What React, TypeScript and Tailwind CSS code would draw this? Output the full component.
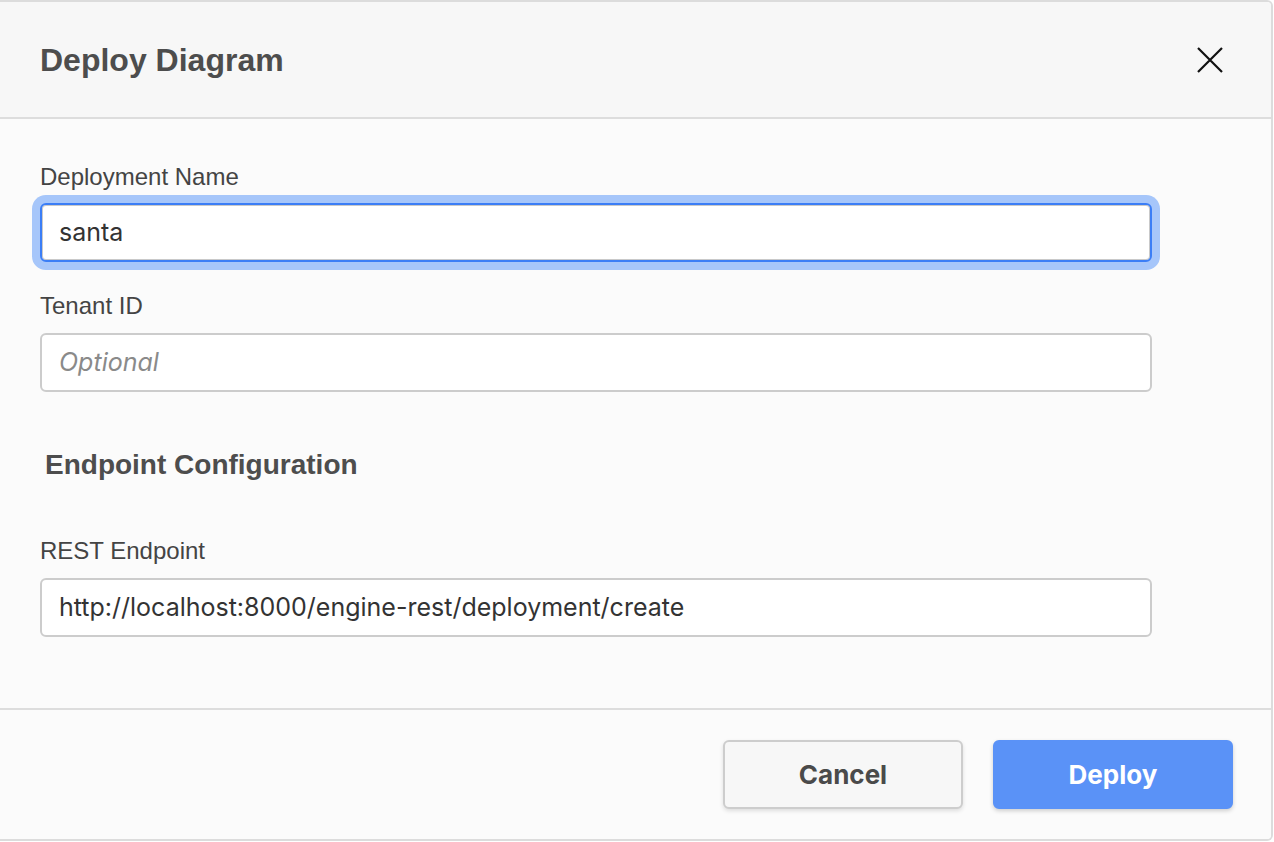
import React from "react";

const font = { fontFamily: '"Liberation Sans", Arial, Helvetica, sans-serif' };
const sys = { fontFamily: 'Inter, "Liberation Sans", Arial, sans-serif' };

export default function App() {
  return (
    <div className="w-[1274px] h-[842px] bg-white" style={font}>
      <div className="w-[1273px] h-[841px] flex flex-col bg-[#fbfbfb] border-t-2 border-r-2 border-b-2 border-[#dcdcdc] rounded-r-[6px] overflow-hidden">
        {/* Header */}
        <div className="h-[117px] shrink-0 flex items-center justify-between pl-[40px] pr-[48px] bg-[#f7f7f7] border-b-2 border-[#dddddd]">
          <h1 className="text-[32px] leading-[40px] font-bold text-[#4d4d4d]">Deploy Diagram</h1>
          <button className="w-[26px] h-[26px] flex items-center justify-center">
            <svg width="26" height="26" viewBox="0 0 26 26">
              <path d="M1 1L25 25M25 1L1 25" stroke="#111" strokeWidth="2.2" fill="none" />
            </svg>
          </button>
        </div>

        {/* Body */}
        <div className="flex-1 pl-[40px] pt-[40px]">
          <div className="w-[1112px] flex flex-col">
            <label className="text-[24px] leading-[36px] text-[#444] mb-[8px]">Deployment Name</label>
            <div
              className="h-[59px] flex items-center px-[17px] bg-white border-2 border-[#3b7ef6] rounded-[6px] shadow-[0_0_0_8px_#a6c6fa,inset_0_0_0_1px_#c9c9c9] text-[25px] text-[#333]"
              style={sys}
            >
              santa
            </div>

            <label className="text-[24px] leading-[36px] text-[#444] mt-[26px] mb-[9px]">Tenant ID</label>
            <div
              className="h-[59px] flex items-center px-[17px] bg-white border-2 border-[#cccccc] rounded-[6px] text-[25px] italic text-[#8a8a8a]"
              style={sys}
            >
              Optional
            </div>

            <h2 className="ml-[5px] mt-[56px] text-[28px] leading-[34px] font-bold text-[#4d4d4d]">Endpoint Configuration</h2>

            <label className="text-[24px] leading-[36px] text-[#444] mt-[51px] mb-[9px]">REST Endpoint</label>
            <div
              className="h-[59px] flex items-center px-[17px] bg-white border-2 border-[#cccccc] rounded-[6px] text-[25px] text-[#333]"
              style={sys}
            >
              http://localhost:8000/engine-rest/deployment/create
            </div>
          </div>
        </div>

        {/* Footer */}
        <div className="h-[131px] shrink-0 flex justify-end items-start gap-[30px] pt-[30px] pr-[38px] border-t-2 border-[#dddddd] bg-[#fbfbfb]">
          <button
            className="w-[240px] h-[69px] rounded-[6px] bg-[#f7f7f7] border-2 border-[#cdcdcd] text-[26px] font-bold text-[#4a4a4a] shadow-[0_2px_4px_rgba(0,0,0,0.12)]"
            style={sys}
          >
            Cancel
          </button>
          <button
            className="w-[240px] h-[69px] rounded-[6px] bg-[#5a92f7] border-2 border-[#5a92f7] text-[26px] font-bold text-white shadow-[0_2px_4px_rgba(0,0,0,0.18)]"
            style={sys}
          >
            Deploy
          </button>
        </div>
      </div>
    </div>
  );
}
